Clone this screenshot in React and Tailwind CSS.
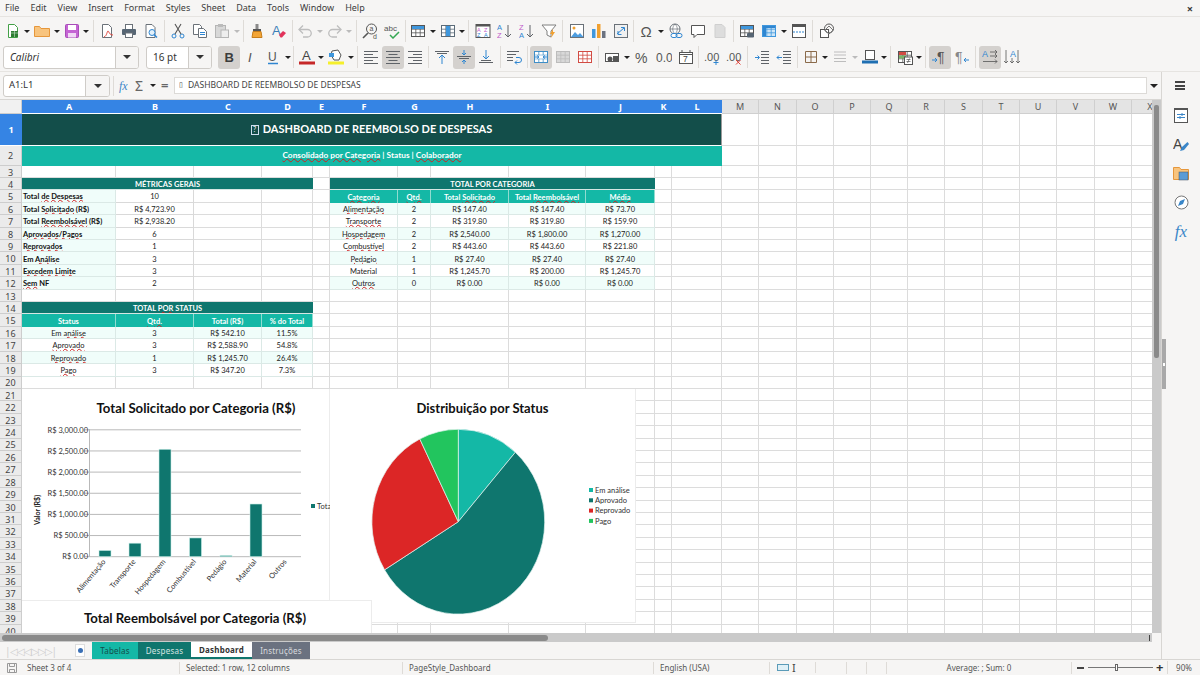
import React from 'react';

const Svg = ({ children }) => (
  <svg width="16" height="16" viewBox="0 0 16 16" fill="none">{children}</svg>
);

const G = '#5f6368';
const B = '#2f86d1';

const Lines = ({ rows, color = G }) => rows.map(([x1, x2, y], i) => (
  <path key={i} d={`M${x1} ${y}H${x2}`} stroke={color} strokeWidth="1" />
));

const Table = ({ fill = '#fff', stroke = '#555' }) => (
  <>
    <rect x="1.5" y="2.5" width="13" height="11" fill={fill} stroke={stroke} />
    <path d="M1.5 6.2h13M1.5 9.8h13M5.8 2.5v11M10.2 2.5v11" stroke={stroke} strokeWidth=".8" />
  </>
);

const L = ({ x, y, fill, size = 7, weight = 400, style = 'normal', children }) => (
  <text x={x} y={y} fill={fill} fontSize={size} fontWeight={weight} fontStyle={style} fontFamily="Liberation Sans, sans-serif">{children}</text>
);

const icons = {
  new: <><path d="M3.5 1.5h6l3 3v10h-9z" fill="#fff" stroke="#43a047" /><rect x="6" y="8" width="7" height="6" fill="#2e7d32" /><path d="M6 10h7M9.5 8v6" stroke="#c8e6c9" strokeWidth=".6" /></>,
  open: <path d="M.5 3.5h5l1.5 2h8.5v8H.5z" fill="#f8c47e" stroke="#e6973b" />,
  save: <><rect x="1.5" y="1.5" width="13" height="13" rx="1" fill="#c564d4" stroke="#a84cb8" /><rect x="4" y="2" width="8" height="5" fill="#fff" /><rect x="4" y="10" width="8" height="4.5" fill="#f1d8f5" /></>,
  pdf: <><path d="M3.5 1.5h6l3 3v10h-9z" fill="#fff" stroke="#6a7178" /><path d="M5 14c3-1 3-6 4-6s1 4 5 4" stroke="#e0433a" /></>,
  print: <><rect x="4.5" y="1.5" width="7" height="5" fill="#fff" stroke="#6a7178" /><rect x="1" y="6" width="14" height="6" rx="1" fill="#566573" /><rect x="4.5" y="10" width="7" height="4.5" fill="#fff" stroke="#6a7178" /></>,
  preview: <><path d="M3 1.5h6l3 3v10H3z" fill="#fff" stroke="#6a7178" /><circle cx="9" cy="9.5" r="3" fill="#e3f1fb" stroke={B} /><path d="M11 11.5l3 3" stroke={B} strokeWidth="1.5" /></>,
  cut: <><circle cx="4" cy="13" r="2" stroke={B} /><circle cx="12" cy="13" r="2" stroke={B} /><path d="M5 11L11 1M11 11L5 1" stroke="#555" strokeWidth="1.1" /></>,
  copy: <><path d="M1.5 1.5h6l2 2v8h-8z" fill="#fff" stroke="#6a7178" /><path d="M6.5 5.5h5l3 3v6h-8z" fill="#fff" stroke="#6a7178" /><path d="M8 9.5h5M8 11.5h5" stroke={B} /></>,
  paste: <><rect x="1.5" y="2.5" width="10" height="12" fill="#d8d8d8" stroke="#b5b5b5" /><rect x="4" y="1" width="5" height="3" fill="#bbb" /><rect x="7" y="7" width="7.5" height="7.5" fill="#eee" stroke="#b5b5b5" /></>,
  clone: <><rect x="6.5" y="1" width="3" height="5" fill="#8a8a8a" /><rect x="4" y="6" width="8" height="2.5" fill="#555" /><path d="M4 8.5h8l1 6H3z" fill="#f3a536" stroke="#c77d1a" /></>,
  clear: <><L x="1" y="12" fill="#3d7fb8" size="13">A</L><path d="M8 12l4-4 3 2-4 4.500H9.500z" fill="#e2335a" /></>,
  undo: <><path d="M3 6.500h7.500a3.700 3.700 0 010 7.500H6" stroke="#bdbdbd" strokeWidth="1.300" /><path d="M6 2.500l-4 4 4 4" stroke="#bdbdbd" strokeWidth="1.300" /></>,
  redo: <><path d="M13 6.500H5.500a3.700 3.700 0 000 7.500H10" stroke="#bdbdbd" strokeWidth="1.300" /><path d="M10 2.500l4 4-4 4" stroke="#bdbdbd" strokeWidth="1.300" /></>,
  find: <><circle cx="9.500" cy="6" r="5" stroke="#555" /><L x="7.500" y="8" fill="#555" size="7">a</L><path d="M6 10l-5 5" stroke="#555" strokeWidth="1.600" /><L x="11" y="15.500" fill="#555" size="7">d</L></>,
  spell: <><L x="0" y="8" fill="#555" size="8">abc</L><path d="M6 12l3 3 6-6" stroke="#35a853" strokeWidth="1.500" /></>,
  rows: <><Table /><rect x="2" y="3" width="12" height="3" fill="#3f97dd" /></>,
  cols: <><Table stroke="#5b6b78" /><rect x="6" y="3" width="4" height="10" fill="#3f97dd" /></>,
  sort: <><rect x="1" y="1.500" width="14" height="13" fill="#fff" stroke="#555" /><rect x="1" y="1.500" width="14" height="2" fill="#555" /><L x="2" y="9" fill="#c05ac9" size="5.500">A</L><L x="9" y="9" fill="#c05ac9" size="5.500">Z</L><L x="2" y="14" fill={B} size="5.500">Z</L><L x="9" y="14" fill={B} size="5.500">A</L></>,
  asc: <><L x="0" y="7" fill={B} size="7.500">A</L><L x="0" y="15" fill="#c05ac9" size="7.500">Z</L><path d="M11 2v12M8 11l3 3 3-3" stroke={G} /></>,
  desc: <><L x="0" y="7" fill="#c05ac9" size="7.500">Z</L><L x="0" y="15" fill={B} size="7.500">A</L><path d="M11 2v12M8 11l3 3 3-3" stroke={G} /></>,
  filter: <><path d="M1 2h14l-5 6v6l-4-2V8z" fill="#fff" stroke="#808080" /><path d="M12 6l-3 5h2l-1 4 4-6h-2z" fill="#f0a030" /></>,
  image: <><rect x="1.500" y="1.500" width="13" height="13" fill="#fff" stroke="#6a7178" /><circle cx="5" cy="5" r="1.500" fill="#f0a030" /><path d="M2 14l4-5 3 3 2-2 3.500 4z" fill="#4d9de0" /></>,
  chart: <><rect x="1" y="6" width="3.500" height="9" fill="#3f97dd" /><rect x="6" y="1" width="3.500" height="14" fill="#f0a030" /><rect x="11" y="8" width="3.500" height="7" fill="#6b7280" /></>,
  pivot: <><rect x="1.500" y="1.500" width="13" height="13" fill="#f0f0f0" stroke="#6a7178" /><path d="M4 11l7-6M8 4.500h3.500V8M5 8v3.500h3.500" stroke={B} /></>,
  omega: <L x="1.500" y="14" fill="#555" size="15">Ω</L>,
  link: <><circle cx="7" cy="6" r="5" fill="#fff" stroke="#6a7178" /><path d="M2 6h10M7 1c-3 3-3 7 0 10M7 1c3 3 3 7 0 10" stroke="#6a7178" strokeWidth=".7" /><rect x="3" y="10.500" width="6" height="4" rx="2" fill="#fff" stroke={B} /><rect x="8" y="10.500" width="6" height="4" rx="2" stroke={B} /></>,
  comment: <path d="M1.500 2.500h13v9H7l-3 3v-3H1.500z" fill="#fff" stroke="#555" />,
  headers: <path d="M3 1.500h7l3 3v10H3z" fill="#ddd" stroke="#cfcfcf" />,
  area: <><Table /><rect x="2" y="3" width="12" height="3" fill="#3f97dd" /><rect x="8" y="10" width="7" height="4.500" rx="1" fill="#566573" /></>,
  freeze: <><Table stroke="#3f97dd" fill="#cfe6f7" /><rect x="2" y="3" width="12" height="2" fill="#2f86d1" /><rect x="2" y="3" width="3" height="10" fill="#2f86d1" /></>,
  split: <><rect x="1.500" y="1.500" width="13" height="13" fill="#fff" stroke="#555" /><rect x="2" y="2" width="12" height="2" fill="#555" /><path d="M2 9h12" stroke={B} strokeDasharray="2 1" /></>,
  shapes: <><rect x="1.500" y="6.500" width="8" height="8" fill="#fff" stroke="#555" /><circle cx="10" cy="5.500" r="4.500" fill="none" stroke="#555" /><path d="M10 3l4 4-4 4-4-4z" stroke="#777" /></>,
  bold: <L x="3.500" y="13" fill="#3c3c3c" size="13" weight="700">B</L>,
  italic: <L x="5" y="13" fill="#555" size="13" style="italic">I</L>,
  under: <><L x="3" y="11.500" fill="#555" size="12">U</L><path d="M3 14.500h10" stroke={B} strokeWidth="1.500" /></>,
  color: <><L x="3" y="11" fill="#444" size="13">A</L><rect x="0" y="12.500" width="16" height="3" fill="#c62828" /></>,
  back: <><path d="M4 2l6-1 3 5-2 5H6L3 6z" fill="#fff" stroke="#555" /><path d="M1 4h5v4H1z" fill="#3f97dd" /><rect x="0" y="12.500" width="16" height="3" fill="#f5ef2b" /></>,
  left: <Lines rows={[[1, 15, 2.500], [1, 10, 5.500], [1, 15, 8.500], [1, 10, 11.500], [1, 15, 14.500]]} />,
  center: <Lines rows={[[1, 15, 2.500], [3.500, 12.500, 5.500], [1, 15, 8.500], [3.500, 12.500, 11.500], [1, 15, 14.500]]} />,
  right: <Lines rows={[[1, 15, 2.500], [6, 15, 5.500], [1, 15, 8.500], [6, 15, 11.500], [1, 15, 14.500]]} />,
  top: <><Lines rows={[[1, 15, 2.500], [3, 13, 4.500]]} /><path d="M8 15V6M5 9l3-3 3 3" stroke={B} /></>,
  middle: <><Lines rows={[[1, 15, 7.500], [3, 13, 9.500]]} /><path d="M8 1v5M6 4l2 2 2-2M8 15v-4M6 13l2-2 2 2" stroke={B} /></>,
  bottom: <><Lines rows={[[3, 13, 11.500], [1, 15, 13.500]]} /><path d="M8 1v9M5 7l3 3 3-3" stroke={B} /></>,
  wrap: <><Lines rows={[[1, 13, 2.500], [1, 10, 5.500], [1, 7, 8.500], [1, 7, 11.500]]} /><path d="M10 8.500h3a2 2 0 010 5H9M11 11.500l-2 2 2 2" stroke={B} /></>,
  merge: <><Table stroke="#3f8ec7" /><rect x="2" y="6.500" width="12" height="3" fill="#fff" /><path d="M2 8h4M14 8h-4M4 6.500L6 8 4 9.500M12 6.500L10 8l2 1.500" stroke={B} /></>,
  mergeOff: <Table stroke="#bcbcbc" fill="#d8d8d8" />,
  split2: <Table stroke="#d24b43" />,
  money: <><rect x="1.500" y="4.500" width="13" height="8" fill="#fff" stroke="#555" /><circle cx="6" cy="10" r="2.500" fill="#555" /><rect x="9" y="7" width="5" height="6" fill="#555" /></>,
  pct: <L x="1" y="14" fill="#555" size="14">%</L>,
  num: <L x="0" y="13" fill="#555" size="12">0.0</L>,
  date: <><rect x="1.500" y="3.500" width="13" height="11" fill="#fff" stroke="#555" /><path d="M1.500 5.500h13M4 1v3M12 1v3" stroke="#555" /><L x="5" y="13" fill="#444" size="8.500">7</L></>,
  decAdd: <><L x="0" y="12" fill="#555" size="11">.00</L><path d="M12 11v5M9.500 13.500h5" stroke={B} /></>,
  decDel: <><L x="0" y="12" fill="#555" size="11">.00</L><path d="M10 11l4.500 4.500M14.500 11L10 15.500" stroke="#e0433a" /></>,
  indent: <><Lines rows={[[7, 15, 2.500], [7, 15, 5.500], [7, 15, 8.500], [7, 15, 11.500], [7, 15, 14.500]]} /><path d="M1 8.500h4M3.500 6.500l2 2-2 2" stroke={B} /></>,
  outdent: <><Lines rows={[[7, 15, 2.500], [7, 15, 5.500], [7, 15, 8.500], [7, 15, 11.500], [7, 15, 14.500]]} /><path d="M6 8.500H1M3 6.500l-2 2 2 2" stroke={B} /></>,
  borders: <path d="M2.500 2.500h11v11h-11zM8 2.500v11M2.500 8h11" stroke="#8a6a4a" />,
  lines: <path d="M2 3h12M2 6h12M2 9.500h12M2 12.500h12" stroke="#bdbdbd" strokeWidth="1.200" />,
  bcolor: <><rect x="3.500" y="1.500" width="9" height="9" fill="#fff" stroke="#555" /><rect x="0" y="11.500" width="16" height="3" fill="#1f6fb2" /></>,
  cond: <><Table /><rect x="2" y="3" width="7" height="3" fill="#d24b43" /><rect x="2" y="6.500" width="7" height="3" fill="#7ab567" /><rect x="7.500" y="8" width="8" height="7.500" fill="#fff" stroke="#555" /><path d="M9.500 10.500h4M9.500 12.500h4M12.500 9.500l-2 4.500" stroke="#555" strokeWidth=".7" /></>,
  ltr: <><L x="5" y="13" fill="#555" size="14">¶</L><path d="M0 11h5M3 9l2 2-2 2" stroke={B} /></>,
  rtl: <><L x="1" y="13" fill="#888" size="14">¶</L><path d="M15 11h-5M12 9l-2 2 2 2" stroke={B} /></>,
  lrText: <><L x="0" y="8" fill={B} size="9">A</L><path d="M8 3h7M8 7h7M1 12.500h14M13 1l2 2-2 2M13 5l2 2-2 2M13 10.500l2 2-2 2" stroke="#555" strokeWidth=".8" /></>,
  tbText: <><L x="6" y="8" fill={B} size="9">A</L><path d="M2 1v13M14 1v13M0 12l2 2 2-2M12 12l2 2 2-2M8 9v5M6 12l2 2 2-2" stroke="#555" strokeWidth=".8" /></>,
};

const SEP = { '|4': 'w-[4px]', '|5': 'w-[5px]', '|5.5': 'w-[5.5px]', '|6': 'w-[6px]', '|7': 'w-[7px]' };

function Tool({ item }) {
  if (SEP[item]) return <div className={`${SEP[item]} flex justify-center`}><div className="w-px h-[22px] bg-[#dedbd7]" /></div>;
  if (item === 'v' || item === 'x') {
    return (
      <div className="w-[7.5px] flex justify-center">
        <div className={item === 'v' ? 'border-x-[3px] border-t-[3px] border-x-transparent border-t-[#222]' : 'border-x-[3px] border-t-[3px] border-x-transparent border-t-[#bbb]'} />
      </div>
    );
  }
  const active = item.endsWith('!');
  const name = active ? item.slice(0, -1) : item;
  return (
    <div className={active ? 'w-[22px] h-[23px] flex items-center justify-center rounded-[3px] bg-[#d4d1ce]' : 'w-[22px] h-[23px] flex items-center justify-center'}>
      <Svg>{icons[name]}</Svg>
    </div>
  );
}

const bar1 = ['new', 'v', 'open', 'v', 'save', 'v', '|6', 'pdf', 'print', 'preview', '|5', 'cut', 'copy', 'paste', 'x', '|5.5', 'clone', 'clear', '|4', 'undo', 'x', 'redo', 'x', '|6', 'find', 'spell', '|4', 'rows', 'v', 'cols', 'v', '|5.5', 'sort', 'asc', 'desc', 'filter', '|6', 'image', 'chart', 'pivot', '|4', 'omega', 'v', 'link', 'comment', 'headers', '|5', 'area', 'freeze', 'v', 'split', '|6', 'shapes'];
const bar2 = ['bold!', 'italic', 'under', 'v', '|4', 'color', 'v', 'back', 'v', '|5.5', 'left', 'center!', 'right', '|5', 'top', 'middle!', 'bottom', '|6', 'wrap', '|5', 'merge!', 'mergeOff', 'split2', '|5', 'money', 'v', 'pct', 'num', 'date', '|4', 'decAdd', 'decDel', '|6', 'indent', 'outdent', '|5', 'borders', 'v', 'lines', 'x', 'bcolor', 'v', '|5.5', 'cond', 'v', '|5.5', 'ltr!', 'rtl', '|6', 'lrText!', 'tbText'];

function Combo({ text, width, italic }) {
  return (
    <div className={`${width} h-[23px] flex rounded-[3px] border border-[#cfccc8] bg-white overflow-hidden`}>
      <div className={italic ? 'flex-1 pl-[6px] flex items-center text-[10px] italic text-[#333]' : 'flex-1 pl-[6px] flex items-center text-[10px] text-[#333]'}>{text}</div>
      <div className="w-[23px] flex items-center justify-center bg-[#f6f5f4] border-l border-[#cfccc8]">
        <div className="border-x-[4px] border-t-[4px] border-x-transparent border-t-[#333]" />
      </div>
    </div>
  );
}

const columns = ['A', 'B', 'C', 'D', 'E', 'F', 'G', 'H', 'I', 'J', 'K', 'L', 'M', 'N', 'O', 'P', 'Q', 'R', 'S', 'T', 'U', 'V', 'W', 'X'];

const SPAN = { 1: '', 4: 'col-span-4', 5: 'col-span-5', 12: 'col-span-12' };

const sec = 'bg-[#0f766e] text-white font-bold text-center border-b border-[#d6e6e3]';
const hdr = 'bg-[#14b8a6] text-white font-bold text-center border-r border-[#8fdcd0]';
const alt = 'bg-[#f0fdfa] text-[#222] text-center border-r border-b border-[#dbe9e6]';
const wht = 'bg-white text-[#222] text-center border-r border-b border-[#dbe9e6]';
const lbl = 'bg-[#f0fdfa] text-[#111] font-bold text-left pl-[1px] border-r border-b border-[#dbe9e6]';
const val = 'bg-white text-[#222] text-center border-r border-b border-[#d9d9d9]';

const catRows = [
  ['~Alimentação~', '2', 'R$ 147.40', 'R$ 147.40', 'R$ 73.70'],
  ['~Transporte~', '2', 'R$ 319.80', 'R$ 319.80', 'R$ 159.90'],
  ['~Hospedagem~', '2', 'R$ 2,540.00', 'R$ 1,800.00', 'R$ 1,270.00'],
  ['~Combustível~', '2', 'R$ 443.60', 'R$ 443.60', 'R$ 221.80'],
  ['~Pedágio~', '1', 'R$ 27.40', 'R$ 27.40', 'R$ 27.40'],
  ['Material', '1', 'R$ 1,245.70', 'R$ 200.00', 'R$ 1,245.70'],
  ['~Outros~', '0', 'R$ 0.00', 'R$ 0.00', 'R$ 0.00'],
];

const metricRows = [
  ['Total ~de Despesas~', '10'],
  ['Total ~Solicitado~ (R$)', 'R$ 4,723.90'],
  ['Total ~Reembolsável~ (R$)', 'R$ 2,938.20'],
  ['~Aprovados/Pagos~', '6'],
  ['~Reprovados~', '1'],
  ['Em ~Análise~', '3'],
  ['~Excedem Limite~', '3'],
  ['~Sem~ NF', '2'],
];

const statusRows = [
  ['Em ~análise~', '3', 'R$ 542.10', '11.5%'],
  ['~Aprovado~', '3', 'R$ 2,588.90', '54.8%'],
  ['~Reprovado~', '1', 'R$ 1,245.70', '26.4%'],
  ['~Pago~', '3', 'R$ 347.20', '7.3%'],
];

// row number -> list of [first column, span, classes, text]
const cells = {
  1: [[0, 12, 'bg-[#134e4a] text-white font-bold text-center text-[11px] pb-[1px] border-b border-r border-b-white border-r-[#9a9a9a]', 'TITLE']],
  2: [[0, 12, 'bg-[#14b8a6] text-white font-bold text-center text-[8.300px] pb-[2px]', '~Consolidado por Categoria~ | Status | ~Colaborador~']],
  4: [[0, 4, sec + ' pt-[2px]', 'MÉTRICAS GERAIS'], [5, 5, sec + ' pt-[2px]', 'TOTAL POR CATEGORIA']],
  5: [[5, 1, hdr + ' pt-[2px]', '~Categoria~'], [6, 1, hdr + ' pt-[2px]', '~Qtd.~'], [7, 1, hdr + ' pt-[2px]', 'Total ~Solicitado~'], [8, 1, hdr + ' pt-[2px]', 'Total ~Reembolsável~'], [9, 1, hdr + ' pt-[2px]', '~Média~']],
  14: [[0, 4, sec + ' pt-[2px]', 'TOTAL ~POR~ STATUS']],
  15: [[0, 1, hdr + ' pt-[2px]', 'Status'], [1, 1, hdr + ' pt-[2px]', '~Qtd.~'], [2, 1, hdr + ' pt-[2px]', 'Total (R$)'], [3, 1, hdr + ' pt-[2px]', '% do Total']],
};
metricRows.forEach(([a, b], i) => {
  const list = cells[5 + i] || [];
  cells[5 + i] = [[0, 1, lbl + ' pt-[2px]', a], [1, 1, val + ' pt-[2px]', b], ...list];
});
catRows.forEach((r, i) => {
  const list = cells[6 + i] || [];
  r.forEach((t, j) => list.push([5 + j, 1, (i % 2 === 0 ? alt : wht) + ' pt-[2px]', t]));
  cells[6 + i] = list;
});
statusRows.forEach((r, i) => {
  cells[16 + i] = r.map((t, j) => [j, 1, (i % 2 === 0 ? alt : wht) + ' pt-[2px]', t]);
});

function Txt({ s }) {
  if (s === 'TITLE') {
    return (
      <span className="inline-flex items-center gap-[4px]">
        <span className="inline-flex items-center justify-center w-[8px] h-[10px] border border-[#cde] text-[7px] leading-none font-normal">?</span>
        DASHBOARD DE REEMBOLSO DE DESPESAS
      </span>
    );
  }
  return s.split('~').map((part, i) => i % 2 === 1
    ? <span key={i} className="underline decoration-wavy decoration-[#d02020] decoration-1 underline-offset-[0px]">{part}</span>
    : <span key={i}>{part}</span>);
}

function SheetRow({ n }) {
  const list = cells[n] || [];
  const out = [];
  for (let c = 0; c < 24;) {
    const cell = list.find((x) => x[0] === c);
    if (cell) {
      out.push(
        <div key={c} className={`${SPAN[cell[1]]} ${cell[2]} flex items-center ${cell[2].includes('text-left') ? 'justify-start' : 'justify-center'} whitespace-nowrap overflow-hidden`}>
          <div><Txt s={cell[3]} /></div>
        </div>
      );
      c += cell[1];
    } else {
      out.push(<div key={c} className="bg-white border-r border-b border-[#dcdcdc]" />);
      c += 1;
    }
  }
  return (
    <>
      <div className={n === 1 ? 'bg-[#3584e4] text-white font-bold flex items-center justify-center border-b border-white text-[9px] font-["Noto_Sans"]' : n === 2 ? 'bg-[#ebebeb] text-[#444] flex items-center justify-center border-b border-r border-[#cdcdcd] text-[9px] font-["Noto_Sans"]' : 'bg-[#ebebeb] text-[#444] flex items-center justify-center pt-[2px] border-b border-r border-[#cdcdcd] text-[9px] font-["Noto_Sans"]'}>{n}</div>
      {out}
    </>
  );
}

const bars = [
  ['Alimentação', 105, 147.4],
  ['Transporte', 135, 319.8],
  ['Hospedagem', 165, 2540],
  ['Combustível', 195.5, 443.6],
  ['Pedágio', 226, 27.4],
  ['Material', 256, 1245.7],
  ['Outros', 286, 0],
];

function BarChart() {
  const y0 = 556.7;
  const scale = 21.15 / 500;
  return (
    <svg width="308" height="212" viewBox="22 389 308 212" className="font-['Lato']">
      <text x="196" y="413" textAnchor="middle" fontSize="13.200" fontWeight="700" fill="#111">Total Solicitado por Categoria (R$)</text>
      {[3000, 2500, 2000, 1500, 1000, 500, 0].map((v) => {
        const y = y0 - v * scale;
        return (
          <g key={v}>
            <path d={`M85 ${y}H301`} stroke="#b9b9b9" />
            <text x="88" y={y + 2.7} textAnchor="end" fontSize="7.500" fill="#333">R$ {v === 0 ? '0.00' : `${v.toLocaleString('en-US')}.00`}</text>
          </g>
        );
      })}
      <path d="M89.500 429V557" stroke="#b9b9b9" />
      {bars.map(([name, x, v]) => (
        <g key={name}>
          <rect x={x - 6} y={y0 - v * scale} width="12" height={v * scale} fill="#0f766e" stroke="#c9eee8" strokeWidth=".6" />
          <text transform={`translate(${x + 1} 562) rotate(-50)`} textAnchor="end" fontSize="7.500" fill="#333">{name}</text>
        </g>
      ))}
      <text transform="translate(39.500 510) rotate(-90)" textAnchor="middle" fontSize="7" fontWeight="700" fill="#222">Valor (R$)</text>
      <rect x="311" y="504" width="4" height="4" fill="#0f766e" />
      <text x="317" y="508.800" fontSize="7.500" fill="#333">Tota</text>
    </svg>
  );
}

const slices = [
  ['Em análise', 542.1, '#14b8a6'],
  ['Aprovado', 2588.9, '#0f766e'],
  ['Reprovado', 1245.7, '#dc2626'],
  ['Pago', 347.2, '#22c55e'],
];

function PieChart() {
  const cx = 458.3;
  const cy = 521.7;
  const rx = 86.4;
  const ry = 92.4;
  const total = slices.reduce((a, s) => a + s[1], 0);
  let acc = 0;
  const pt = (f) => [cx + rx * Math.sin(f * 2 * Math.PI), cy - ry * Math.cos(f * 2 * Math.PI)];
  return (
    <svg width="306" height="234" viewBox="330 389 306 234" className="font-['Lato']">
      <text x="482.500" y="412.500" textAnchor="middle" fontSize="13" fontWeight="700" fill="#111">Distribuição por Status</text>
      {slices.map(([name, v, color]) => {
        const from = acc / total;
        acc += v;
        const [x1, y1] = pt(from);
        const [x2, y2] = pt(acc / total);
        const large = v / total > 0.5 ? 1 : 0;
        return <path key={name} d={`M${cx} ${cy}L${x1} ${y1}A${rx} ${ry} 0 ${large} 1 ${x2} ${y2}Z`} fill={color} stroke="#e4f3f0" strokeWidth=".7" />;
      })}
      {slices.map(([name, , color], i) => (
        <g key={name}>
          <rect x="589" y={488 + i * 10.3} width="4" height="4" fill={color} />
          <text x="595" y={492.800 + i * 10.3} fontSize="7.500" fill="#333">{name}</text>
        </g>
      ))}
    </svg>
  );
}

function SideIcon({ children }) {
  return <div className="h-[29px] flex items-center justify-center">{children}</div>;
}

export default function App() {
  return (
    <div className="w-[1200px] h-[675px] overflow-hidden flex flex-col bg-[#f6f5f4] font-['Noto_Sans'] text-[#444]">
      {/* menu bar */}
      <div className="h-[17px] flex items-center gap-[11px] pl-[5px] pr-[7px] border-b border-[#e6e4e1] text-[9px] text-[#3d3d3d]">
        {['File', 'Edit', 'View', 'Insert', 'Format', 'Styles', 'Sheet', 'Data', 'Tools', 'Window', 'Help'].map((m) => <span key={m}>{m}</span>)}
        <span className="ml-auto text-[11px] font-bold leading-none">×</span>
      </div>

      {/* standard toolbar */}
      <div className="h-[27px] flex items-center pl-[1.500px] pt-[1px]">
        {bar1.map((t, i) => <Tool key={i} item={t} />)}
      </div>

      {/* formatting toolbar */}
      <div className="h-[28px] flex items-center pl-[3px] pb-[1px] border-b border-[#e6e4e1]">
        <Combo text="Calibri" italic width="w-[136px]" />
        <div className="w-[7px]" />
        <Combo text="16 pt" width="w-[66px]" />
        <div className="w-[6px]" />
        {bar2.map((t, i) => <Tool key={i} item={t} />)}
      </div>

      <div className="flex-1 min-h-0 flex">
        <div className="w-[1161px] flex flex-col">
          {/* formula bar */}
          <div className="h-[28px] flex items-center pl-[3px] border-b border-[#d8d6d3]">
            <div className="w-[107px] h-[22px] flex rounded-[3px] border border-[#cfccc8] bg-white overflow-hidden">
              <div className="flex-1 pl-[5px] flex items-center text-[9.500px] text-[#333]">A1:L1</div>
              <div className="w-[24px] flex items-center justify-center bg-[#f6f5f4] border-l border-[#cfccc8]">
                <div className="border-x-[4px] border-t-[4px] border-x-transparent border-t-[#333]" />
              </div>
            </div>
            <div className="w-px h-[20px] bg-[#dedbd7] ml-[3px]" />
            <span className="ml-[5px] w-[14px] text-[12px] italic text-[#3a86c8] font-['Liberation_Serif']">fx</span>
            <span className="ml-[2px] w-[12px] text-[14px] text-[#666] leading-none">Σ</span>
            <div className="ml-[3px] border-x-[3px] border-t-[3px] border-x-transparent border-t-[#222]" />
            <span className="ml-[5px] w-[10px] text-[13px] font-bold text-[#666] leading-none">=</span>
            <div className="ml-[3px] w-[973px] h-[17px] flex items-center bg-white border border-[#dcdad7] pl-[4px] text-[8.500px] text-[#444] whitespace-nowrap">
              <span className="w-[9px] text-[7px]">▯</span>DASHBOARD DE REEMBOLSO DE DESPESAS
            </div>
            <div className="ml-[3px] border-x-[4px] border-t-[4px] border-x-transparent border-t-[#222]" />
          </div>

          <div className="flex-1 min-h-0 flex flex-col">
            <div className="flex-1 min-h-0 flex">
              {/* sheet */}
              <div className="relative w-[1152px] h-[533px] overflow-hidden bg-white font-['Lato'] text-[7.500px]">
                <div className="grid grid-cols-[22px_94px_78px_68px_51px_17px_68px_33px_78px_77px_69px_17px_50px_37px_38px_37px_37px_37px_37px_38px_37px_37px_38px_37px_37px] grid-rows-[14px_32px_20px_12px_repeat(37,12.42px)]">
                  <div className="bg-[#f1f1f1] border-r border-b border-[#cdcdcd]" />
                  {columns.map((c, i) => (
                    <div key={c} className={i < 12 ? 'bg-[#3584e4] text-white font-bold flex items-center justify-center border-b border-white text-[9px] font-["Noto_Sans"]' : 'bg-[#e4e4e4] text-[#555] flex items-center justify-center border-r border-b border-[#cfcfcf] text-[9px] font-["Noto_Sans"]'}>{c}</div>
                  ))}
                  {Array.from({ length: 40 }, (_, i) => <SheetRow key={i} n={i + 1} />)}
                </div>

                {/* charts sit on top of the cells */}
                <div className="absolute left-[22px] top-[289px] w-[308px] h-[212px] bg-white border-r border-[#ececec]"><BarChart /></div>
                <div className="absolute left-[330px] top-[289px] w-[306px] h-[234px] bg-white border-r border-b border-[#ececec]"><PieChart /></div>
                <div className="absolute left-[22px] top-[500px] w-[350px] h-[33px] bg-white border-t border-r border-[#ececec] text-center text-[13.200px] font-bold text-[#111] pt-[11px] pr-[3px] leading-none">Total Reembolsável por Categoria (R$)</div>
              </div>
              {/* vertical scrollbar */}
              <div className="w-[9px] bg-[#cacaca] px-[2px] pt-[5px]">
                <div className="w-[5px] h-[253px] rounded-[2px] bg-[#8a8a8a]" />
              </div>
            </div>
            {/* horizontal scrollbar */}
            <div className="h-[9px] flex bg-[#cacaca] items-center pl-[2px] w-[1152px]">
              <div className="w-[546px] h-[6px] rounded-[3px] bg-[#8a8a8a]" />
              <div className="ml-auto mr-[2px] w-px h-[6px] bg-[#444]" />
            </div>
            {/* sheet tabs */}
            <div className="h-[17px] flex items-center text-[8px] tracking-[0.2px]">
              <div className="w-[68px] pl-[5px] flex items-center text-[10px] leading-none text-[#cfcfcf] tracking-[-1px] whitespace-nowrap">|◁◁◁▷▷▷|</div>
              <div className="w-[24px] flex justify-center">
                <div className="relative w-[10px] h-[13px] bg-white border border-[#ddd]">
                  <div className="absolute right-[1px] top-[3px] w-[5px] h-[5px] rounded-full bg-[#3a6fb5]" />
                </div>
              </div>
              <div className="w-[46px] h-[17px] flex items-center justify-center bg-[#14b8a6] text-[#134e4a]">Tabelas</div>
              <div className="w-[53px] h-[17px] flex items-center justify-center bg-[#0f766e] text-[#d7e4e2]">Despesas</div>
              <div className="w-[61px] h-[17px] flex items-center justify-center bg-white font-bold text-[#333] border-b-2 border-[#0f766e]">Dashboard</div>
              <div className="w-[58px] h-[17px] flex items-center justify-center bg-[#6b7280] text-[#d8dade]">Instruções</div>
            </div>
          </div>
        </div>

        {/* sidebar */}
        <div className="relative w-[39px] border-l border-[#d8d6d3] flex flex-col">
          <div className="h-[27px] flex items-center justify-center pr-[2px]">
            <div className="w-[10px] h-[9px] border-y-2 border-[#444] flex items-center"><div className="w-full h-[2px] bg-[#444]" /></div>
          </div>
          <div className="h-[2px]" />
          <SideIcon>
            <svg width="14" height="15" viewBox="0 0 14 15" fill="none"><rect x=".5" y=".5" width="13" height="14" fill="#fff" stroke="#555" /><rect x="0" y="0" width="14" height="2" fill="#555" /><path d="M3 6.500h8M3 9.500h8M8 5v3M6 8v3" stroke="#3a86c8" /></svg>
          </SideIcon>
          <SideIcon>
            <svg width="16" height="16" viewBox="0 0 16 16" fill="none"><text x="0" y="12" fontSize="14" fill="#444" fontFamily="Liberation Sans, sans-serif">A</text><path d="M14.500 5L9 10l-2 4 4-1 5-6z" fill="#3a86c8" /></svg>
          </SideIcon>
          <SideIcon>
            <svg width="16" height="15" viewBox="0 0 16 15" fill="none"><path d="M.5 1.500h6l1.500 2h7.500v10H.5z" fill="#f8c47e" stroke="#e6973b" /><rect x="6" y="6" width="9" height="8" fill="#5a9bd5" stroke="#456" strokeWidth=".5" /></svg>
          </SideIcon>
          <SideIcon>
            <svg width="15" height="15" viewBox="0 0 15 15" fill="none"><circle cx="7.500" cy="7.500" r="6.500" fill="#fff" stroke="#777" /><path d="M11 4L6 6 4 11l5-2z" fill="#3a86c8" /></svg>
          </SideIcon>
          <SideIcon>
            <span className="text-[17px] italic text-[#3a86c8] font-['Liberation_Serif'] leading-none">fx</span>
          </SideIcon>
          <div className="absolute left-0 top-[267px] w-[4px] h-[50px] bg-[#a9a9a9] flex items-center justify-center"><div className="w-[2px] h-[3px] bg-white" /></div>
        </div>
      </div>

      {/* status bar */}
      <div className="h-[16px] flex items-center border-t border-[#d8d6d3] text-[8px] text-[#555] whitespace-nowrap">
        <div className="w-[180px] flex items-center pl-[6px] border-r border-[#dedbd7]">
          <svg width="12" height="12" viewBox="0 0 12 12" fill="none"><path d="M1.500 1.500h9v9h-9zM3.500 1.500v3h5v-3M3.500 10.500v-3h5v3" stroke="#999" /></svg>
          <span className="ml-[9px]">Sheet 3 of 4</span>
        </div>
        <div className="w-[223px] pl-[6px] border-r border-[#dedbd7]">Selected: 1 row, 12 columns</div>
        <div className="w-[251px] pl-[6px] border-r border-[#dedbd7]">PageStyle_Dashboard</div>
        <div className="w-[116px] pl-[6px] border-r border-[#dedbd7]">English (USA)</div>
        <div className="w-[46px] flex items-center pl-[7px] gap-[3px] border-r border-[#dedbd7]">
          <div className="w-[12px] h-[7px] bg-[#dff0f7] border border-[#5a9bb8]" />
          <span className="text-[11px] leading-none text-[#444]">I</span>
        </div>
        <div className="w-[31px] h-[12px] border-r border-[#dedbd7]" />
        <div className="w-[20px] h-[12px] border-r border-[#dedbd7]" />
        <div className="w-[20px] h-[12px] border-r border-[#dedbd7]" />
        <div className="w-[185px] text-center border-r border-[#dedbd7]">Average: ; Sum: 0</div>
        <div className="w-[96px] flex items-center pl-[5px] border-r border-[#dedbd7]">
          <span className="w-[7px] h-[2px] bg-[#444]" />
          <div className="relative ml-[4px] w-[65px] h-px bg-[#777]">
            <div className="absolute left-[27px] -top-[3px] w-[3px] h-[7px] bg-white border border-[#666]" />
          </div>
          <span className="ml-[3px] text-[13px] leading-none font-bold text-[#333]">+</span>
        </div>
        <div className="flex-1 text-center">90%</div>
      </div>
    </div>
  );
}
